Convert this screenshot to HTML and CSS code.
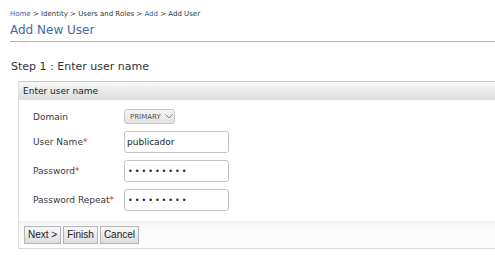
FILE: index.html
```html
<!DOCTYPE html>
<html lang="en">
<head>
    <meta charset="UTF-8">
    <meta name="viewport" content="width=device-width, initial-scale=1.0">
    <title>Add User</title>
    <link rel="stylesheet" href="styles.css">
</head>
<body>
    <div class="breadcrumb">
        <a href="#">Home</a> &gt; Identity &gt; Users and Roles &gt; <a href="#">Add</a> &gt; Add User
    </div>
    <h2 class="page-title">Add New User</h2>

    <h3 class="step-title">Step 1 : Enter user name</h3>

    <div class="box">
        <div class="box-header">Enter user name</div>
        <form class="user-form" onsubmit="return false">
            <label>Domain</label>
            <div class="select-box">
                <span>PRIMARY</span>
                <svg width="8" height="5" viewBox="0 0 8 5"><path d="M0.5 0.5 L4 4 L7.5 0.5" fill="none" stroke="#8a8a8a" stroke-width="1"/></svg>
            </div>

            <label for="username">User Name<span class="req">*</span></label>
            <input type="text" id="username" value="publicador">

            <label for="password">Password<span class="req">*</span></label>
            <input type="password" id="password" value="publicado">

            <label for="password2">Password Repeat<span class="req">*</span></label>
            <input type="password" id="password2" value="publicado">
        </form>
        <div class="buttons">
            <button type="button">Next &gt;</button>
            <button type="button">Finish</button>
            <button type="button">Cancel</button>
        </div>
    </div>
</body>
</html>
```

FILE: styles.css
```css
html {
    overflow: hidden;
}

body {
    font-family: "DejaVu Sans", sans-serif;
    margin: 0;
    padding: 0;
    background-color: #fff;
    color: #333;
}

.breadcrumb {
    font-size: 7px;
    line-height: 10px;
    padding: 9px 0 0 10px;
    color: #333;
}

.breadcrumb a {
    color: #3366a8;
    text-decoration: none;
}

.page-title {
    font-size: 12px;
    font-weight: normal;
    line-height: 15px;
    color: #3b6da6;
    margin: 4px 0 0 10px;
    padding-bottom: 3px;
    border-bottom: 1px solid #a5b7d1;
}

.step-title {
    font-size: 11px;
    font-weight: normal;
    line-height: 14px;
    color: #333;
    margin: 18px 0 0 11px;
}

.box {
    margin: 7px 0 0 18px;
    border-left: 1px solid #ddd;
}

.box-header {
    font-size: 9px;
    line-height: 18px;
    height: 18px;
    padding-left: 4px;
    color: #222;
    border-top: 1px solid #c9c9c9;
    background: linear-gradient(#f6f7f7, #dcdddd);
}

.user-form {
    display: grid;
    grid-template-columns: 91px 105px;
    row-gap: 7px;
    align-items: center;
    padding: 9px 0 10px 14px;
}

.user-form label {
    font-size: 9px;
    color: #3a3a3a;
}

.req {
    color: #e02020;
}

.select-box {
    display: flex;
    align-items: center;
    gap: 4px;
    width: 51px;
    height: 15px;
    box-sizing: border-box;
    padding-left: 5px;
    font-size: 7px;
    color: #555;
    border: 1px solid #c8c8c8;
    border-radius: 3px;
    background: linear-gradient(#f4f4f4, #e2e2e2);
}

.user-form input {
    width: 105px;
    height: 22px;
    box-sizing: border-box;
    padding: 0 2px;
    border: 1px solid #c4c4c4;
    border-radius: 3px;
    font-family: "DejaVu Sans", sans-serif;
    font-size: 9px;
    color: #222;
    outline: none;
}

.user-form input[type="password"] {
    font-size: 8px;
    letter-spacing: 2px;
    padding-left: 3px;
}

.buttons {
    display: flex;
    gap: 2px;
    height: 27px;
    align-items: center;
    padding-left: 5px;
    border-bottom: 1px solid #dcdcdc;
    background: linear-gradient(#efefef, #fafafa 5px, #fcfcfc);
}

.buttons button {
    font-family: "Liberation Sans", Arial, sans-serif;
    font-size: 10px;
    height: 18px;
    padding: 0 3px;
    color: #222;
    border: 1px solid #b5b5b5;
    background: linear-gradient(#f8f8f8, #dedede);
    cursor: pointer;
}
```
